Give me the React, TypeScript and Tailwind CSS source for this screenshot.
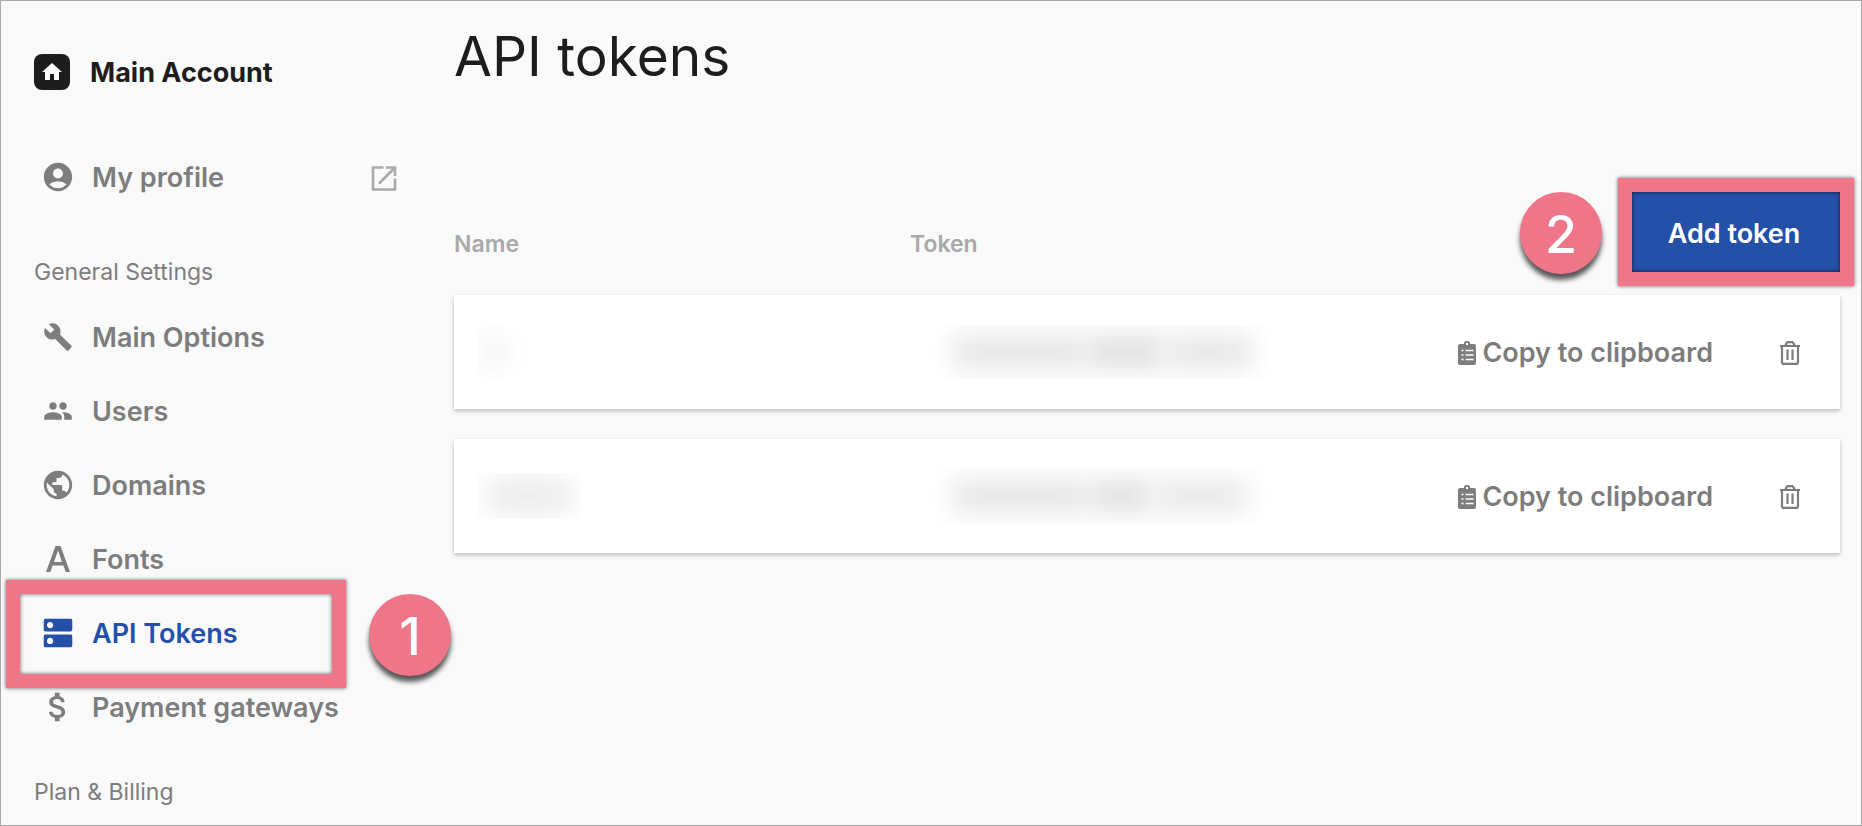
import type { ReactNode } from "react";
import type { IconType } from "react-icons";
import {
  MdAccountCircle,
  MdAttachMoney,
  MdBuild,
  MdDns,
  MdHome,
  MdPeople,
  MdPublic,
} from "react-icons/md";

function FontIcon({ className }: { className?: string }) {
  return (
    <svg viewBox="0 0 34 34" fill="currentColor" className={className}>
      <path d="M14.5 4h5L29 30h-4.3l-2.3-6.4H11.6L9.3 30H5L14.5 4ZM13 20h8L17 8.6Z" />
    </svg>
  );
}

function OpenIcon() {
  return (
    <svg viewBox="0 0 26 26" fill="none" stroke="currentColor" strokeWidth="2.6" className="size-[26px]">
      <path d="M12.5 2.5H2v22h22V13.5" />
      <path d="M15 2.5h9v8.5M23.5 3L8 18.5" />
    </svg>
  );
}

function ClipboardIcon() {
  return (
    <svg viewBox="0 0 20 24" className="w-5 h-6">
      <path
        fill="currentColor"
        d="M3 3h3.8a3.2 3.2 0 0 1 6.400 0H17a2 2 0 0 1 2 2v17a2 2 0 0 1-2 2H3a2 2 0 0 1-2-2V5a2 2 0 0 1 2-2Z"
      />
      <circle cx="10" cy="3" r="1.2" fill="#fff" />
      <path stroke="#fff" strokeWidth="1.4" d="M4.5 9.5h2M8.5 9.5h8M4.5 14h2M8.5 14h8M4.5 18.5h2M8.5 18.5h8" />
    </svg>
  );
}

function TrashIcon() {
  return (
    <svg viewBox="0 0 22 24" fill="none" stroke="currentColor" strokeWidth="2.2" className="w-[22px] h-6">
      <path d="M1 5h20M6 5l2-3.4q.3-.5 1-.5h4q.7 0 1 .5L16 5M3 5v15.900a2 2 0 0 0 2 2h12a2 2 0 0 0 2-2V5" />
      <path d="M8.5 8.500v10.500M13.5 8.500v10.500" />
    </svg>
  );
}

type NavItem = {
  label: string;
  icon: IconType | typeof FontIcon;
  iconSize: string;
  active?: boolean;
};

const settings: NavItem[] = [
  { label: "Main Options", icon: MdBuild, iconSize: "size-[30px]" },
  { label: "Users", icon: MdPeople, iconSize: "size-[30px]" },
  { label: "Domains", icon: MdPublic, iconSize: "size-[34px]" },
  { label: "Fonts", icon: FontIcon, iconSize: "size-[34px]" },
  { label: "API Tokens", icon: MdDns, iconSize: "size-[38px]", active: true },
  { label: "Payment gateways", icon: MdAttachMoney, iconSize: "size-[38px]" },
];

const tokens = [
  {
    id: 1,
    name: <Redacted className="w-[50px] h-[52px]" blobs={["w-6 mr-4 bg-[#f2f2f2]"]} />,
    token: (
      <Redacted
        className="w-[338px] h-[54px]"
        blobs={["w-[136px] bg-[#e8e8e8]", "w-[76px] bg-[#e2e2e2]", "w-[90px] bg-[#e8e8e8]"]}
      />
    ),
  },
  {
    id: 2,
    name: <Redacted className="w-[104px] h-[46px]" blobs={["w-[86px] bg-[#ebebeb]"]} />,
    token: (
      <Redacted
        className="w-[334px] h-[56px]"
        blobs={["w-[140px] bg-[#e8e8e8]", "w-[60px] bg-[#e3e3e3]", "w-[98px] bg-[#eaeaea]"]}
      />
    ),
  },
];

function Redacted({ className, blobs }: { className: string; blobs: string[] }) {
  return (
    <div className={`flex items-center justify-center overflow-hidden ${className}`}>
      {blobs.map((blob, i) => (
        <span key={i} className={`h-9 rounded-lg blur-[12px] ${blob}`} />
      ))}
    </div>
  );
}

function Frame() {
  return (
    <span className="absolute -inset-[14px] border-[14px] border-[#ef7689] shadow-[0_0_4px_rgba(0,0,0,0.6),inset_0_0_4px_rgba(0,0,0,0.6)] pointer-events-none" />
  );
}

function Badge({ children, className }: { children: ReactNode; className: string }) {
  return (
    <span
      className={`absolute flex items-center justify-center size-[82px] pt-[3px] rounded-full bg-[#ef7689] text-white text-[52px] font-medium shadow-[0_6px_5px_rgba(0,0,0,0.65)] ${className}`}
    >
      {children}
    </span>
  );
}

export default function App() {
  return (
    <div className="flex min-h-screen border border-[#a9a9a9] bg-[#f9f9f9] font-['Inter',sans-serif] text-[#7d7d7d]">
      <aside className="w-[453px] shrink-0 pt-[53px]">
        <a href="#account" className="flex items-center gap-[20px] h-9 ml-[33px] text-[27px] font-bold text-[#1d1d1d]">
          <span className="flex items-center justify-center size-9 rounded-lg bg-[#1d1d1d] text-white">
            <MdHome className="size-6" />
          </span>
          <span className="pt-[2px]">Main Account</span>
        </a>

        <a href="#profile" className="flex items-center h-[74px] mt-[50px] ml-[40px] mr-[57px] text-[27px] font-semibold">
          <MdAccountCircle className="size-[34px]" />
          <span className="ml-[17px] pt-[2px]">My profile</span>
          <span className="ml-auto pt-[2px] text-[#a9a9a9]">
            <OpenIcon />
          </span>
        </a>

        <h2 className="mt-[42px] ml-[33px] text-[23px] leading-8">General Settings</h2>
        <nav className="mt-[12px]">
          {settings.map(({ label, icon: Icon, iconSize, active }) => (
            <a
              key={label}
              href="#settings"
              className={`relative flex items-center h-[74px] ml-[40px] text-[27px] font-semibold ${active ? "text-[#2450a8]" : ""}`}
            >
              <span className="flex items-center justify-center w-[34px]">
                <Icon className={`shrink-0 ${iconSize}`} />
              </span>
              <span className="ml-[17px] pt-[2px]">{label}</span>
              {active && (
                <span className="absolute -left-[21px] -top-[2px] w-[312px] h-[80px]">
                  <Frame />
                  <Badge className="left-[349px] top-0">1</Badge>
                </span>
              )}
            </a>
          ))}
        </nav>
        <h2 className="mt-[32px] ml-[33px] text-[23px] leading-8">Plan &amp; Billing</h2>
      </aside>

      <main className="flex-1 pt-[21px] pr-[21px]">
        <h1 className="text-[55px] leading-[68px] text-[#1d1d1d]">API tokens</h1>

        <table className="block mt-[102px] text-left">
          <thead className="block">
            <tr className="grid grid-cols-[456fr_510fr_420fr] items-end">
              <th className="pb-[14px] text-[23px] leading-7 font-semibold text-[#a9a9a9]">Name</th>
              <th className="pb-[14px] text-[23px] leading-7 font-semibold text-[#a9a9a9]">Token</th>
              <th className="flex justify-end">
                <div className="relative">
                  <button className="block w-[208px] h-[80px] pt-[5px] pr-[4px] bg-[#2450a8] text-[27px] font-semibold text-white">
                    Add token
                  </button>
                  <Frame />
                  <Badge className="right-[238px] top-0">2</Badge>
                </div>
              </th>
            </tr>
          </thead>
          <tbody className="flex flex-col gap-[30px] mt-[23px]">
            {tokens.map(({ id, name, token }) => (
              <tr
                key={id}
                className="grid grid-cols-[456fr_510fr_420fr] items-center h-[114px] bg-white shadow-[0_2px_4px_rgba(0,0,0,0.25)]"
              >
                <td className="pl-[23px]">{name}</td>
                <td className="pl-[23px]">{token}</td>
                <td className="flex items-center justify-end pt-[2px] pr-[39px]">
                  <button className="flex items-center gap-[5px] text-[27px] font-semibold whitespace-nowrap">
                    <ClipboardIcon />
                    Copy to clipboard
                  </button>
                  <button aria-label="Delete token" className="ml-[66px]">
                    <TrashIcon />
                  </button>
                </td>
              </tr>
            ))}
          </tbody>
        </table>
      </main>
    </div>
  );
}
